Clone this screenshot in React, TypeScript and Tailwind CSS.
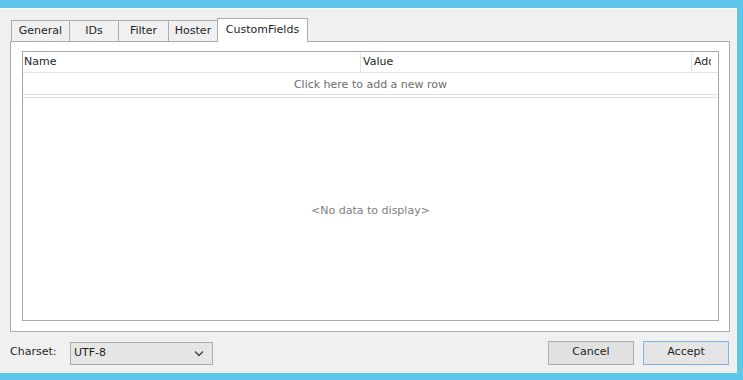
const font = { fontFamily: "Tahoma, 'DejaVu Sans', sans-serif" };

const tabs = ["General", "IDs", "Filter", "Hoster", "CustomFields"];
const tabWidths = ["w-[58px]", "w-[49px]", "w-[50px]", "w-[49px]", "w-[91px]"];

function ChevronDown() {
  return (
    <svg width="10" height="7" viewBox="0 0 10 7" className="text-[#444]">
      <path d="M1 1.5 L5 5.5 L9 1.5" fill="none" stroke="currentColor" strokeWidth="1.4" />
    </svg>
  );
}

export default function App() {
  return (
    <div
      className="w-[743px] h-[380px] bg-[#5ec6ea] flex flex-col pt-[8px] pb-[7px] pr-[6px] text-[11px] text-[#1e1e1e]"
      style={font}
    >
      <div className="flex-1 bg-[#f0f0f0] border-t border-[#f8f8f8] flex flex-col px-[10px] pr-[7px]">
        {/* tab strip */}
        <div className="flex items-end h-[32px] pl-[1px]">
          {tabs.map((t, i) => {
            const active = i === tabs.length - 1;
            return (
              <div
                key={t}
                className={
                  active
                    ? `${tabWidths[i]} h-[24px] -mb-px bg-white border border-b-0 border-[#adadad] flex items-start justify-center pt-[3px] relative z-10`
                    : `${tabWidths[i]} h-[21px] bg-[#f0f0f0] border border-b-0 border-r-0 border-[#adadad] flex items-center justify-center`
                }
              >
                {t}
              </div>
            );
          })}
        </div>

        {/* tab panel */}
        <div className="h-[291px] bg-white border border-[#adadad] pl-[11px] pr-[10px] pt-[9px] pb-[10px] flex">
          <div className="flex-1 min-w-0 overflow-hidden border border-[#a8a8a8] flex flex-col">
            <div className="h-[21px] flex border-b border-[#e2e2e2] bg-white pt-[1px]">
              <div className="w-[338px] shrink-0 border-r border-[#e2e2e2] pl-[1px] flex items-center">Name</div>
              <div className="w-[331px] shrink-0 border-r border-[#e2e2e2] pl-[2px] flex items-center">Value</div>
              <div className="flex-1 min-w-0 pl-[2px] pr-[7px] flex items-center">
                <span className="overflow-hidden whitespace-nowrap">Added</span>
              </div>
            </div>
            <div className="h-[22px] flex items-center justify-center text-[#6d6d6d] border-b border-[#e2e2e2] pt-[3px]">
              Click here to add a new row
            </div>
            <div className="h-[3px] border-b border-[#e2e2e2]" />
            <div className="flex-1 flex items-center justify-center text-[#7d7d7d] pt-[5px]">
              &lt;No data to display&gt;
            </div>
          </div>
        </div>

        {/* bottom bar */}
        <div className="flex-1 flex items-center">
          <span className="w-[60px]">Charset:</span>
          <div className="w-[143px] h-[23px] bg-[#e6e6e6] border border-[#acacac] flex items-center justify-between pl-[3px] pr-[8px] mt-[2px]">
            <span>UTF-8</span>
            <ChevronDown />
          </div>
          <div className="flex-1" />
          <button className="w-[86px] h-[24px] bg-[#e1e1e1] border border-[#adadad] mr-[9px]">Cancel</button>
          <button className="w-[86px] h-[24px] bg-[#e5e5e5] border border-[#7eb4ea] mr-[1px]">Accept</button>
        </div>
      </div>
    </div>
  );
}
